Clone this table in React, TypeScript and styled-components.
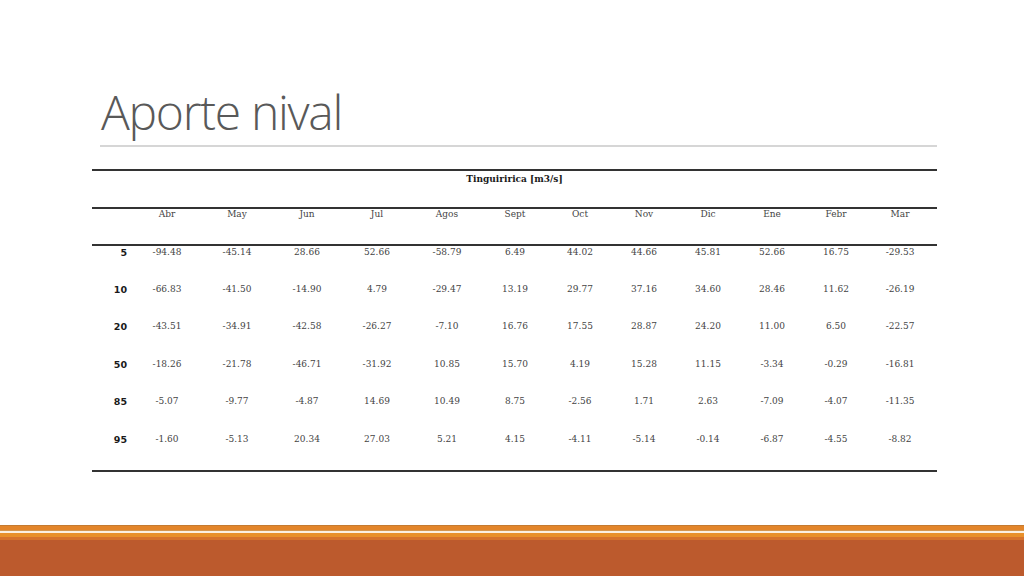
import React from 'react';
import styled, { createGlobalStyle } from 'styled-components';

const months = ['Abr', 'May', 'Jun', 'Jul', 'Agos', 'Sept', 'Oct', 'Nov', 'Dic', 'Ene', 'Febr', 'Mar'];

// label column, then the month columns (last one keeps a bit of room on the right)
const colWidths = [40, 70, 70, 70, 70, 70, 66, 64, 64, 64, 64, 64, 69];

const rows = [
  { label: '5', values: ['-94.48', '-45.14', '28.66', '52.66', '-58.79', '6.49', '44.02', '44.66', '45.81', '52.66', '16.75', '-29.53'] },
  { label: '10', values: ['-66.83', '-41.50', '-14.90', '4.79', '-29.47', '13.19', '29.77', '37.16', '34.60', '28.46', '11.62', '-26.19'] },
  { label: '20', values: ['-43.51', '-34.91', '-42.58', '-26.27', '-7.10', '16.76', '17.55', '28.87', '24.20', '11.00', '6.50', '-22.57'] },
  { label: '50', values: ['-18.26', '-21.78', '-46.71', '-31.92', '10.85', '15.70', '4.19', '15.28', '11.15', '-3.34', '-0.29', '-16.81'] },
  { label: '85', values: ['-5.07', '-9.77', '-4.87', '14.69', '10.49', '8.75', '-2.56', '1.71', '2.63', '-7.09', '-4.07', '-11.35'] },
  { label: '95', values: ['-1.60', '-5.13', '20.34', '27.03', '5.21', '4.15', '-4.11', '-5.14', '-0.14', '-6.87', '-4.55', '-8.82'] },
];

const stripes = [
  { color: '#c47a30', h: 1 },
  { color: '#e3852a', h: 4 },
  { color: '#d39650', h: 1 },
  { color: '#fbf0e0', h: 2 },
  { color: '#e8902a', h: 4 },
  { color: '#d6722c', h: 3 },
  { color: '#bc5a2d', h: 36 },
];

const GlobalStyle = createGlobalStyle`
  html, body {
    margin: 0;
    padding: 0;
    background: #ffffff;
  }
`;

const Slide = styled.div`
  width: 1024px;
  height: 576px;
  display: flex;
  flex-direction: column;
  overflow: hidden;
  background: #ffffff;
`;

const Header = styled.div`
  padding: 88px 87px 0 100px;
`;

const Title = styled.h1`
  margin: 0 0 0 1px;
  font-family: 'Open Sans', 'Liberation Sans', sans-serif;
  font-weight: 300;
  font-size: 48px;
  line-height: 48px;
  letter-spacing: -1.3px;
  color: #595959;
`;

const Rule = styled.div`
  margin-top: 9px;
  height: 2px;
  background: #d6d6d6;
`;

const TableWrap = styled.div`
  padding: 22px 0 0 92px;
`;

const Table = styled.table`
  width: 845px;
  table-layout: fixed;
  border-collapse: collapse;
  font-family: 'DejaVu Serif', 'Liberation Serif', serif;
  font-size: 9px;
  line-height: 11px;
  color: #444;
`;

const Row = styled.tr<{ $h: number; $top?: boolean; $bottom?: boolean }>`
  height: ${p => p.$h}px;
  border-top: ${p => (p.$top ? '2px solid #333' : 'none')};
  border-bottom: ${p => (p.$bottom ? '2px solid #333' : 'none')};
`;

const Cell = styled.td<{ $last?: boolean; $pad: number }>`
  vertical-align: top;
  text-align: center;
  padding: ${p => p.$pad}px ${p => (p.$last ? '5px' : '0')} 0 0;
  white-space: nowrap;
`;

const TitleCell = styled.td`
  vertical-align: top;
  text-align: center;
  padding: 3px 0 0;
  font-weight: bold;
  color: #1a1a1a;
`;

const LabelCell = styled.td`
  vertical-align: top;
  text-align: right;
  padding: 1px 5px 0 0;
  font-family: 'DejaVu Sans', 'Liberation Sans', sans-serif;
  font-weight: bold;
  font-size: 9.5px;
  color: #1a1a1a;
`;

const Footer = styled.div`
  margin-top: auto;
  display: flex;
  flex-direction: column;
`;

const Stripe = styled.div<{ $color: string; $h: number }>`
  height: ${p => p.$h}px;
  background: ${p => p.$color};
`;

export default function App() {
  return (
    <Slide>
      <GlobalStyle />
      <Header>
        <Title>Aporte nival</Title>
        <Rule />
      </Header>
      <TableWrap>
        <Table>
          <colgroup>
            {colWidths.map((w, i) => (
              <col key={i} width={w} />
            ))}
          </colgroup>
          <tbody>
            <Row $h={38} $top>
              <TitleCell colSpan={13}>Tinguiririca [m3/s]</TitleCell>
            </Row>
            <Row $h={37} $top $bottom>
              <Cell $pad={0} />
              {months.map((m, i) => (
                <Cell key={m} $pad={0} $last={i === months.length - 1}>{m}</Cell>
              ))}
            </Row>
            {rows.map((r, ri) => (
              <Row key={r.label} $h={37.6} $bottom={ri === rows.length - 1}>
                <LabelCell>{r.label}</LabelCell>
                {r.values.map((v, i) => (
                  <Cell key={i} $pad={1} $last={i === r.values.length - 1}>{v}</Cell>
                ))}
              </Row>
            ))}
          </tbody>
        </Table>
      </TableWrap>
      <Footer>
        {stripes.map((s, i) => (
          <Stripe key={i} $color={s.color} $h={s.h} />
        ))}
      </Footer>
    </Slide>
  );
}
